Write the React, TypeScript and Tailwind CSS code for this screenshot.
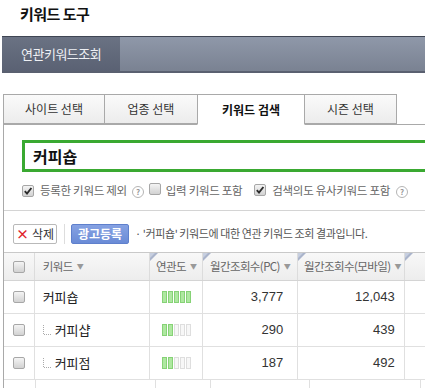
import React from "react";

const KR = { fontFamily: '"Noto Sans CJK KR", "Noto Sans", sans-serif' };
const NUM = { fontFamily: '"Liberation Sans", Arial, sans-serif' };

function Check({ checked }: { checked?: boolean }) {
  return (
    <span className="inline-flex w-[12px] h-[12px] shrink-0 items-center justify-center rounded-[2px] border border-[#a7a7a7] bg-gradient-to-b from-[#f4f4f4] to-[#d2d2d2]">
      {checked && (
        <svg width="10" height="10" viewBox="0 0 10 10">
          <path d="M1.8 5.2 L4 7.6 L8.4 2" stroke="#2b2b2b" strokeWidth="1.9" fill="none" />
        </svg>
      )}
    </span>
  );
}

function Help() {
  return (
    <span className="inline-flex w-[12px] h-[12px] shrink-0 items-center justify-center rounded-full border border-[#b5b5b5] text-[8px] leading-none text-[#999] font-bold bg-white">
      ?
    </span>
  );
}

function Ear() {
  return (
    <svg width="8" height="8" viewBox="0 0 8 8" className="absolute left-0 top-0">
      <polygon points="0,0 8,0 0,8" fill="#aab4cb" />
      <polygon points="0,0 5,0 0,5" fill="#c7cfe0" />
    </svg>
  );
}

function Arrow() {
  return <span className="ml-[4px] text-[7px] text-[#999]">▼</span>;
}

function Tree() {
  return (
    <svg width="8" height="10" viewBox="0 0 8 10" className="mr-[4px] shrink-0">
      <path d="M0.5 0 V9.5 H8" stroke="#aaa" strokeWidth="1" strokeDasharray="1 1" fill="none" />
    </svg>
  );
}

function Bars({ n }: { n: number }) {
  return (
    <div className="flex gap-px">
      {[0, 1, 2, 3, 4].map((i) => (
        <span
          key={i}
          className={
            i < n
              ? "w-[5px] h-[12px] bg-[#aee8a0] border border-[#86d276]"
              : "w-[5px] h-[12px] bg-[#f7f7f7] border border-[#dedede]"
          }
        />
      ))}
    </div>
  );
}

const rows = [
  { kw: "커피숍", child: false, rel: 5, pc: "3,777", mo: "12,043" },
  { kw: "커피샵", child: true, rel: 2, pc: "290", mo: "439" },
  { kw: "커피점", child: true, rel: 2, pc: "187", mo: "492" },
];

export default function App() {
  const tabs = [
    { label: "사이트 선택", w: "w-[102px]" },
    { label: "업종 선택", w: "w-[94px]" },
    { label: "키워드 검색", w: "w-[108px]", active: true },
    { label: "시즌 선택", w: "w-[93px]" },
  ];
  return (
    <div className="w-[425px] h-[388px] overflow-hidden bg-white text-[#333]" style={KR}>
      <div className="h-[36px] pl-[20px] pt-[3px] text-[15px] font-bold text-[#111] tracking-[-0.5px]">키워드 도구</div>

      <div className="ml-[2px] w-[430px] h-[37px] flex border-t border-[#3f4553] border-b-2 border-b-[#5a6070]">
        <div className="w-[118px] flex items-center pl-[19px] bg-gradient-to-b from-[#6a7283] to-[#5a6173] text-[13px] text-[#eef0f4] tracking-[-0.5px]">
          연관키워드조회
        </div>
        <div className="flex-1 bg-gradient-to-b from-[#8f98a9] to-[#7a8292]" />
      </div>

      <div className="h-[21px]" />

      <div className="ml-[3px] flex h-[30px]">
        {tabs.map((t, i) => (
          <div
            key={t.label}
            className={[
              t.w,
              i > 0 ? "-ml-px" : "",
              "flex items-center justify-center border border-[#a9a9a9] text-[12px]",
              t.active
                ? "bg-white font-bold text-[#111] border-b-white relative z-10 h-[31px]"
                : "bg-gradient-to-b from-[#fafafa] to-[#ececec] text-[#333]",
            ].join(" ")}
          >
            {t.label}
          </div>
        ))}
      </div>

      <div className="ml-[3px] w-[440px] border-l border-t border-[#a9a9a9]">
        <div className="pt-[15px] pl-[18px]">
          <div className="h-[32px] w-[420px] border-[3px] border-[#3aa931] flex items-center pl-[8px] text-[16px] font-bold text-[#111]">
            커피숍
          </div>
          <div className="h-[38px] flex items-center text-[11.5px] text-[#666] tracking-[-0.3px]">
            <Check checked />
            <span className="ml-[6px]">등록한 키워드 제외</span>
            <span className="ml-[5px]"><Help /></span>
            <span className="ml-[5px]"><Check /></span>
            <span className="ml-[5px]">입력 키워드 포함</span>
            <span className="ml-[12px]"><Check checked /></span>
            <span className="ml-[6px]">검색의도 유사키워드 포함</span>
            <span className="ml-[6px]"><Help /></span>
          </div>
        </div>
        <div className="border-t border-[#d4d4d4]">
          <div className="h-[41px] flex items-center pl-[9px] pt-[4px]">
            <div className="h-[20px] w-[44px] flex items-center justify-center gap-[3px] border border-[#b9b9b9] rounded-[2px] bg-white text-[12px] text-[#333]">
              <span className="text-[#e0242a] font-bold text-[13px] leading-none">×</span>
              <span>삭제</span>
            </div>
            <div className="ml-[7px] w-px h-[20px] bg-[#dddddd]" />
            <div className="ml-[6px] h-[20px] w-[58px] flex items-center justify-center rounded-[2px] border border-[#5f80cc] bg-gradient-to-b from-[#86a2e3] to-[#6a8bd6] text-[12px] font-bold text-white">
              광고등록
            </div>
            <span className="ml-[6px] text-[11px] text-[#555] tracking-[-0.4px] whitespace-nowrap">· '커피숍' 키워드에 대한 연관 키워드 조회 결과입니다.</span>
          </div>

          <div className="border-t border-[#c9c9c9]">
            <div className="flex h-[28px] border-b border-[#d4d4d4] bg-gradient-to-b from-[#f8f8f8] to-[#ededed] text-[11.5px] text-[#666] whitespace-nowrap tracking-[-0.6px]">
              <div className="w-[32px] border-r border-[#dcdcdc] flex items-center justify-center"><Check /></div>
              <div className="w-[120px] border-r border-[#dcdcdc] flex items-center pl-[8px]">키워드<Arrow /></div>
              <div className="relative w-[55px] border-r border-[#dcdcdc] flex items-center pl-[6px]"><Ear />연관도<Arrow /></div>
              <div className="relative w-[99px] border-r border-[#dcdcdc] flex items-center pl-[7px]"><Ear />월간조회수(PC)<Arrow /></div>
              <div className="relative w-[111px] border-r border-[#dcdcdc] flex items-center pl-[6px]"><Ear />월간조회수(모바일)<Arrow /></div>
              <div className="relative w-[40px]"><Ear /></div>
            </div>
            {rows.map((r) => (
              <div key={r.kw} className="flex h-[33px] border-b border-[#e0e0e0] text-[13px] text-[#222]">
                <div className="w-[32px] border-r border-[#e0e0e0] flex items-center justify-center"><Check /></div>
                <div className="w-[120px] border-r border-[#e0e0e0] flex items-center pl-[8px]">
                  {r.child && <Tree />}
                  {r.kw}
                </div>
                <div className="w-[55px] border-r border-[#e0e0e0] flex items-center pl-[12px]"><Bars n={r.rel} /></div>
                <div className="w-[99px] border-r border-[#e0e0e0] flex items-center justify-end pr-[14px] text-[13px] text-[#333]" style={NUM}>{r.pc}</div>
                <div className="w-[111px] border-r border-[#e0e0e0] flex items-center justify-end pr-[9px] text-[13px] text-[#333]" style={NUM}>{r.mo}</div>
                <div className="w-[40px]" />
              </div>
            ))}
            <div className="flex h-[20px]">
              <div className="w-[32px] border-r border-[#e0e0e0]" />
              <div className="w-[120px] border-r border-[#e0e0e0]" />
              <div className="w-[55px] border-r border-[#e0e0e0]" />
              <div className="w-[99px] border-r border-[#e0e0e0]" />
              <div className="w-[111px] border-r border-[#e0e0e0]" />
            </div>
          </div>
        </div>
      </div>
    </div>
  );
}
